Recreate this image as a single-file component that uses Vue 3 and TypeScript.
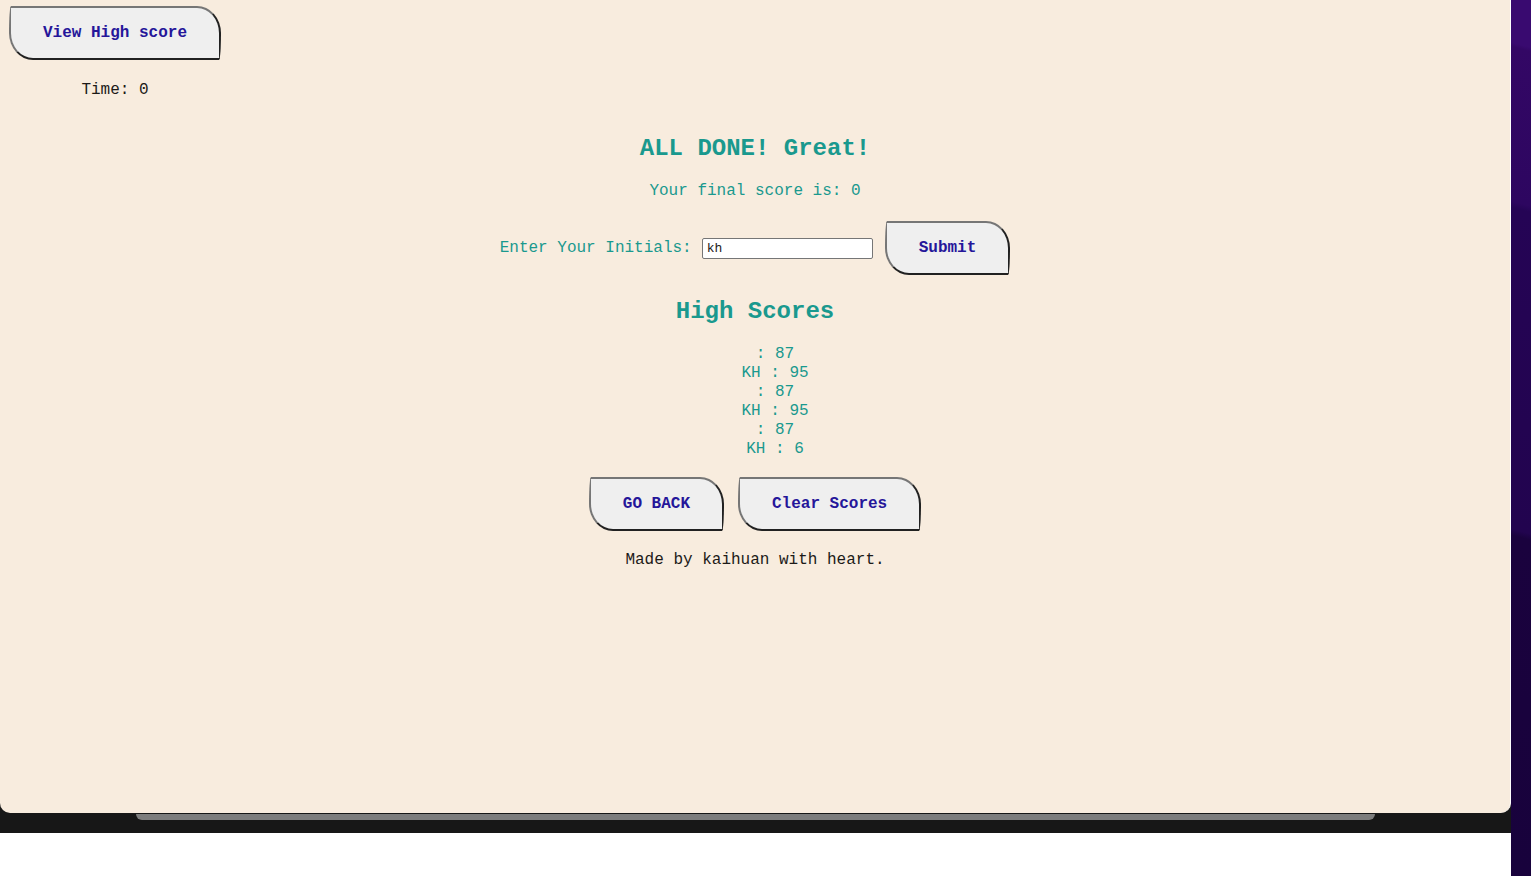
<script setup lang="ts">
import { ref } from 'vue'

interface Score {
  initials: string
  points: number
}

const time = ref(0)
const finalScore = ref(0)
const initials = ref('kh')
const showScores = ref(true)
const scores = ref<Score[]>([
  { initials: '', points: 87 },
  { initials: 'KH', points: 95 },
  { initials: '', points: 87 },
  { initials: 'KH', points: 95 },
  { initials: '', points: 87 },
  { initials: 'KH', points: 6 },
])

function submit(): void {
  scores.value.push({ initials: initials.value.toUpperCase(), points: finalScore.value })
  showScores.value = true
}

function clearScores(): void {
  scores.value = []
}
</script>

<template>
  <div class="desktop">
    <div class="screen">
      <div class="shade">
        <div class="window">
          <header class="top">
            <button type="button" class="btn" @click="showScores = true">View High score</button>
            <div class="time">Time: {{ time }}</div>
          </header>
          <main class="content">
            <h2>ALL DONE! Great!</h2>
            <p class="final">Your final score is: {{ finalScore }}</p>
            <form class="entry" @submit.prevent="submit">
              <label for="initials">Enter Your Initials:</label>
              <input id="initials" v-model="initials" type="text" />
              <button type="submit" class="btn">Submit</button>
            </form>
            <section v-if="showScores" class="scores">
              <h2>High Scores</h2>
              <ul>
                <li v-for="(s, i) in scores" :key="i">{{ s.initials }} : {{ s.points }}</li>
              </ul>
              <div class="actions">
                <button type="button" class="btn" @click="showScores = false">GO BACK</button>
                <button type="button" class="btn" @click="clearScores">Clear Scores</button>
              </div>
            </section>
          </main>
          <footer>Made by kaihuan with heart.</footer>
        </div>
        <div class="behind"></div>
      </div>
    </div>
    <div class="wallpaper"></div>
  </div>
</template>

<style>
body {
  margin: 0;
  background: #ffffff;
}
</style>

<style scoped>
.desktop {
  display: grid;
  grid-template-columns: 1fr 20px;
  min-height: 100vh;
  font-family: "Liberation Mono", "Courier New", monospace;
  font-size: 16px;
  line-height: 18px;
  color: #1c1a18;
}

.screen {
  display: flex;
  flex-direction: column;
  padding-bottom: 43px;
  background: #ffffff;
}

.shade {
  flex: 1;
  display: flex;
  flex-direction: column;
  padding-bottom: 13px;
  background: #171717;
}

.window {
  flex: 1;
  padding: 6px 9px;
  border-right: 1px solid #ffffff;
  border-radius: 0 0 10px 10px;
  background: #f8ecde;
}

.behind {
  height: 6px;
  margin: 1px 9% 0;
  border-radius: 0 0 8px 8px;
  background: #7d7d7d;
}

.wallpaper {
  background: linear-gradient(194deg, #390a70 0 46px, #330765 50px, #2d0660 200px, #250455 206px, #22044f 518px, #1a023e 524px, #18023c 100%);
}

.top {
  display: flex;
  flex-direction: column;
  align-items: center;
  gap: 21px;
  width: max-content;
}

.content {
  display: flex;
  flex-direction: column;
  align-items: center;
  padding-top: 36px;
  color: #1a998e;
}

h2 {
  margin: 0;
  font-size: 24px;
  line-height: 27px;
  font-weight: 700;
  text-align: center;
}

.final {
  margin: 20px 0 21px;
}

.entry {
  display: flex;
  align-items: center;
}

.entry input {
  box-sizing: border-box;
  width: 171px;
  height: 21px;
  margin: 0 12px 0 10px;
  padding: 1px 4px;
  border: 1px solid #767676;
  border-radius: 2px;
  background: #ffffff;
  color: #1c1a18;
  font-family: inherit;
  font-size: 13px;
}

.btn {
  padding: 16px 32px;
  border: 2px solid;
  border-color: #767676 #212121 #212121 #767676;
  border-radius: 2px 24px / 27px;
  background: #efefef;
  color: #25169a;
  font-family: inherit;
  font-size: 16px;
  line-height: 18px;
  font-weight: 700;
}

.scores {
  padding-top: 23px;
}

ul {
  margin: 20px 0 18px;
  padding: 0 0 0 40px;
  list-style: none;
  text-align: center;
  line-height: 19px;
}

.actions {
  display: flex;
  justify-content: center;
  gap: 14px;
}

footer {
  padding-top: 20px;
  text-align: center;
}
</style>
